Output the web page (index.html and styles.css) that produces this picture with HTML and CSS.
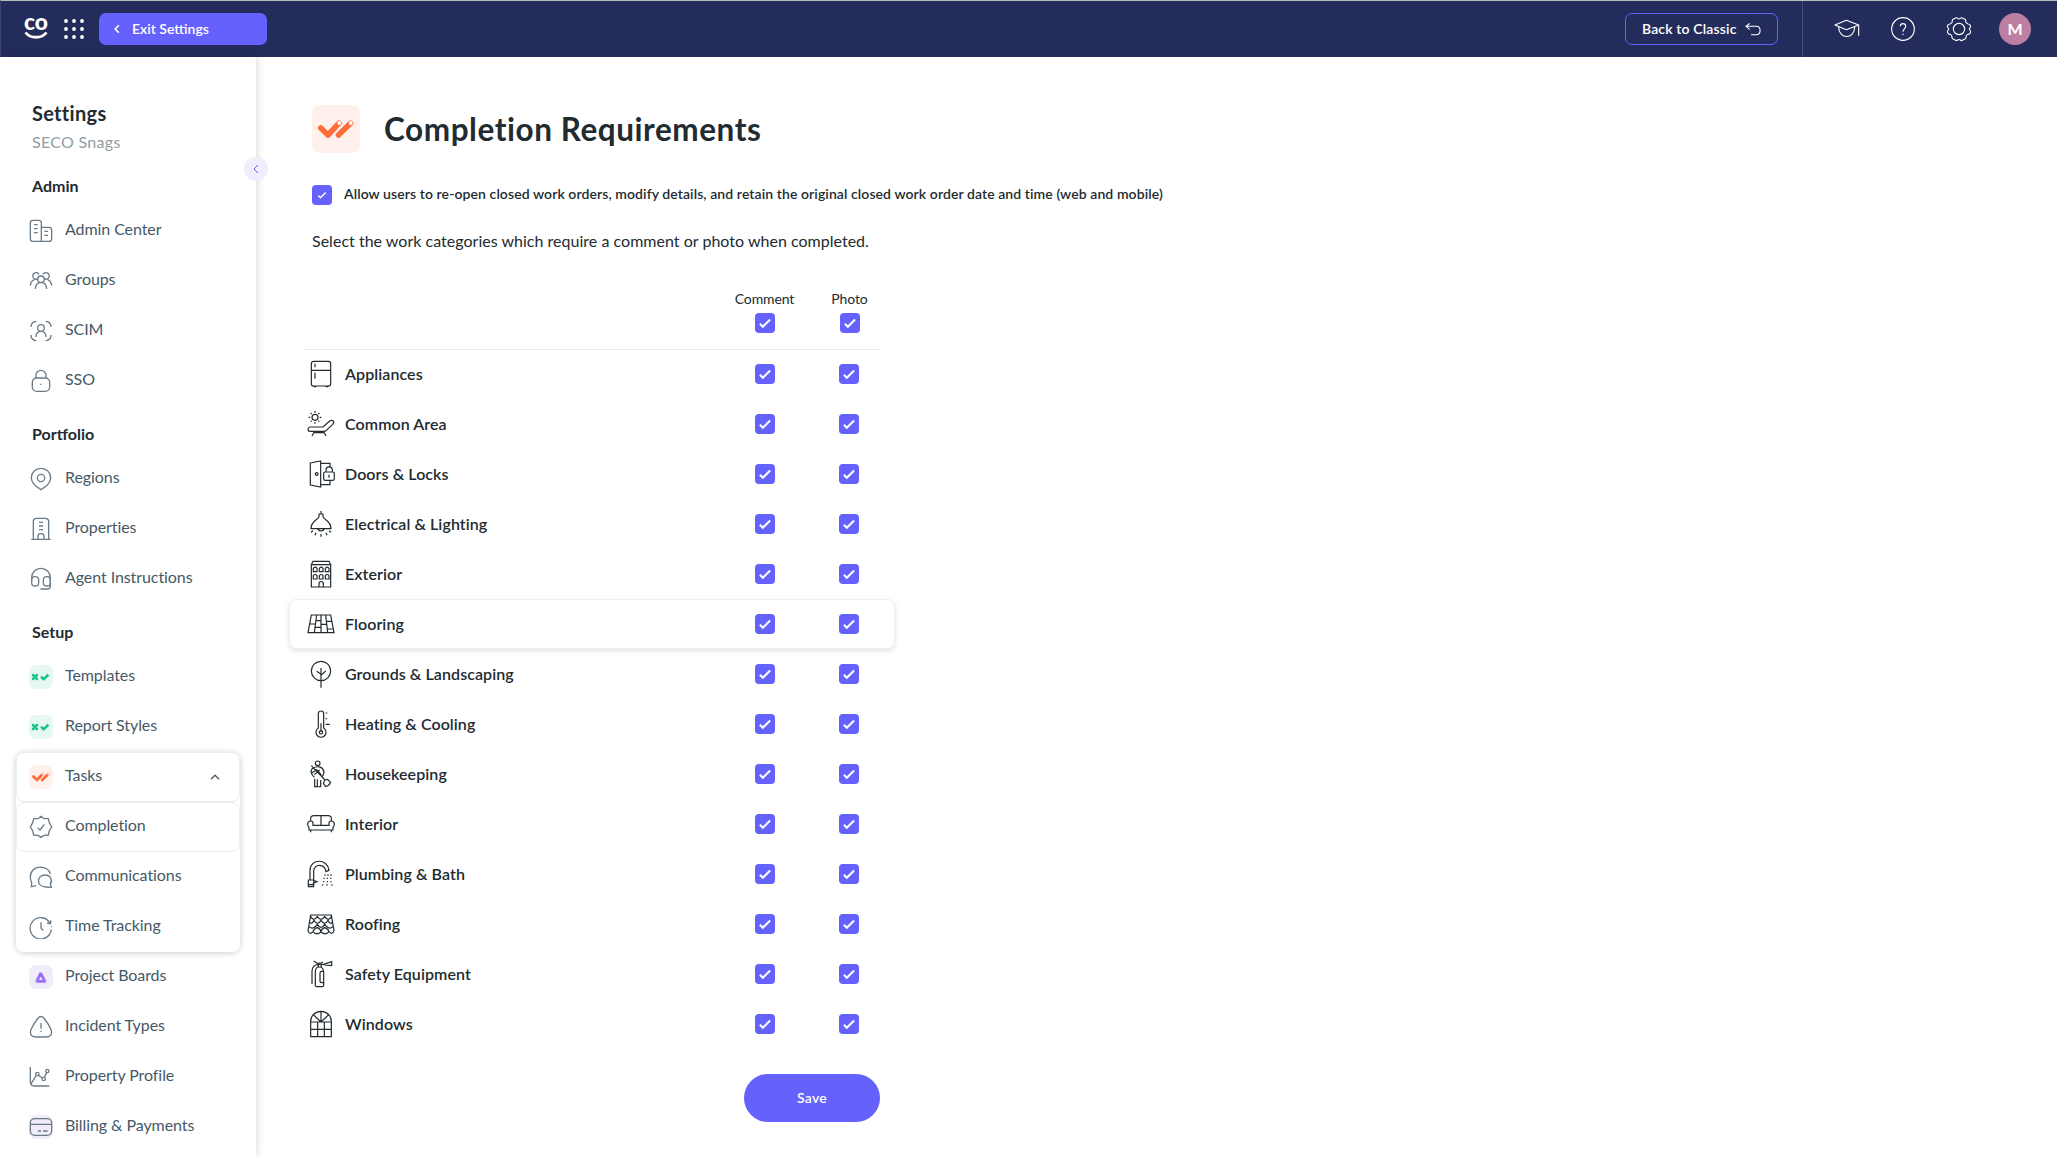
FILE: index.html
```html
<!DOCTYPE html>
<html lang="en">
<head>
    <meta charset="UTF-8">
    <meta name="viewport" content="width=device-width, initial-scale=1.0">
    <title>Completion Requirements</title>
    <link rel="stylesheet" href="styles.css">
</head>
<body>

    <!-- shared shapes -->
    <svg class="defs" width="0" height="0">
        <symbol id="tick" viewBox="0 0 20 20"><path d="M4.900 10.800l2.900 3 7.300-7.300" fill="none" stroke="#fff" stroke-width="2"/></symbol>
        <symbol id="xcheck" viewBox="0 0 72 72"><path d="M12 30l12 12M24 30l-12 12M38 37l6 6 13-13" fill="none" stroke="#1fc28b" stroke-width="7.500" stroke-linecap="round" stroke-linejoin="round"/><circle cx="59" cy="28" r="2.200" fill="#e5f8f2" stroke="none"/></symbol>
        <symbol id="tasks" viewBox="0 0 48 48"><path d="M8.800 23l7.200 7L27 18.200M26.500 30L38.500 18.200" fill="none" stroke="#ff6d3a" stroke-width="5.600" stroke-linecap="round" stroke-linejoin="round"/><circle cx="27.300" cy="18" r="1.900" fill="#fff" stroke="none"/><circle cx="38.700" cy="18" r="1.900" fill="#fff" stroke="none"/></symbol>
    </svg>

    <header class="topbar">
        <svg class="logo" viewBox="0 0 26 24">
            <text x="1" y="14" textLength="24" lengthAdjust="spacingAndGlyphs">co</text>
            <path d="M2.500 16.500c5 6.300 16 6.300 21 0" fill="none" stroke="#fff" stroke-width="2.800"/>
        </svg>
        <svg class="apps" viewBox="0 0 20 20" fill="#fff">
            <circle cx="2" cy="2" r="1.900"/><circle cx="10" cy="2" r="1.900"/><circle cx="18" cy="2" r="1.900"/>
            <circle cx="2" cy="10" r="1.900"/><circle cx="10" cy="10" r="1.900"/><circle cx="18" cy="10" r="1.900"/>
            <circle cx="2" cy="18" r="1.900"/><circle cx="10" cy="18" r="1.900"/><circle cx="18" cy="18" r="1.900"/>
        </svg>
        <a class="exit"><svg viewBox="0 0 6 10"><path d="M4.800 1.200L1.200 5l3.600 3.800"/></svg><span>Exit Settings</span></a>
        <a class="classic"><span>Back to Classic</span>
            <svg viewBox="0 0 48 42"><path d="M14 4L3 13l11 9M3 13h31c15 0 15 25 0 25H18"/></svg>
        </a>
        <div class="tools">
            <svg viewBox="0 0 84 84"><path d="M6 30l34-14 37 14-37 14zM17 36c0 38 48 38 48 0M77 30v32"/></svg>
            <svg viewBox="0 0 84 84"><circle cx="42" cy="42" r="34"/><path d="M34 34c0-11 16-11 16 0 0 8-8 7-8 16M42 56v4"/></svg>
            <svg viewBox="0 0 84 84"><circle cx="42" cy="42" r="17"/><path d="M32 9q3-2 6 1 4 3 8 0 3-3 6-1l8 4q3 2 2 6 0 6 7 8 5 0 7 4 2 4-1 7-4 4 0 8 3 3 1 7-2 5-7 5-6 2-6 8 1 4-3 6l-8 4q-3 2-6-1-4-3-8 0-3 3-6 1l-8-4q-4-2-3-6 0-6-6-8-5 0-7-5-2-4 1-7 4-4 0-8-3-3-1-7 2-4 7-4 7-2 7-8-1-4 2-6z"/></svg>
            <span class="avatar">M</span>
        </div>
    </header>

    <div class="layout">
        <aside class="sidebar">
            <div class="collapse"><svg viewBox="0 0 6 10"><path d="M5 1L1 5l4 4"/></svg></div>
            <h2>Settings</h2>
            <p class="account">SECO Snags</p>

            <h3>Admin</h3>
            <a class="item"><svg viewBox="0 0 72 72"><path d="M37 67H12q-8 0-8-8V12q0-8 8-8h17q8 0 8 8v55h23q8 0 8-8V33q0-8-8-8H37M15 17h11M15 29h11M15 41h11M46 37h11M46 49h11"/></svg>Admin Center</a>
            <a class="item"><svg viewBox="0 0 72 72"><circle cx="36" cy="31" r="10"/><path d="M27 29a10 10 0 1 1 3-13M45 29a10 10 0 1 0-3-13M19 60q1-20 17-20t17 20M4 50q1-14 12-18M68 50q-1-14-12-18"/></svg>Groups</a>
            <a class="item"><svg viewBox="0 0 72 72"><circle cx="36" cy="27" r="10"/><path d="M21 54q0-17 15-17t15 17M6 24q0-16 16-17M50 7q16 1 16 17M6 48q0 16 16 17M50 65q16-1 16-17"/></svg>SCIM</a>
            <a class="item"><svg viewBox="0 0 72 72"><rect x="10" y="27" width="52" height="40" rx="13"/><path d="M21 27v-8a15 15 0 0 1 30 0v8M36 44v4"/></svg>SSO</a>

            <h3>Portfolio</h3>
            <a class="item"><svg viewBox="0 0 72 72"><path d="M36 68C24 61 7 49 7 32a29 28 0 0 1 58 0c0 17-17 29-29 36z"/><circle cx="36" cy="33" r="11"/></svg>Regions</a>
            <a class="item"><svg viewBox="0 0 72 72"><path d="M7 67h58M13 67V14q0-10 10-10h26q10 0 10 10v53M30 16h12M30 27h12M30 38h12M27 67V57q0-7 9-7t9 7v10"/></svg>Properties</a>
            <a class="item"><svg viewBox="0 0 72 72"><path d="M8 42V32a28 28 0 0 1 56 0v26q0 8-8 8H34"/><rect x="8" y="29" width="21" height="28" rx="10"/><rect x="43" y="29" width="21" height="28" rx="10"/></svg>Agent Instructions</a>

            <h3>Setup</h3>
            <a class="item"><svg class="green"><use href="#xcheck"/></svg>Templates</a>
            <a class="item"><svg class="green"><use href="#xcheck"/></svg>Report Styles</a>
            <div class="group">
                <a class="item boxed"><svg class="orange"><use href="#tasks"/></svg>Tasks<svg class="caret" viewBox="0 0 10 6"><path d="M1 5.200l4-4 4 4"/></svg></a>
                <a class="item boxed active"><svg viewBox="0 0 72 72"><path d="M36 4l9 7 13 0 3 12 7 13-7 11-3 13-13 1-9 6-9-6-13-1-3-13-7-11 7-13 3-12 13 0z"/><path d="M26 38l7 7 13-17"/></svg>Completion</a>
                <a class="item"><svg viewBox="0 0 72 72"><path d="M64 27C60 0 4-4 4 36q0 10 4 17l-1 12 14-3"/><path d="M67 67l-16-1c-30 0-29-36-3-36 20 0 22 19 16 27z"/></svg>Communications</a>
                <a class="item"><svg viewBox="0 0 72 72"><path d="M63 24A32 32 0 1 0 67 44M66 16l-2 10-10-2M36 22v17l7 8M67 34v2"/></svg>Time Tracking</a>
            </div>
            <a class="item"><svg class="violet" viewBox="0 0 72 72"><path d="M35 25L23 49h25z" fill="none" stroke="#9b6dff" stroke-width="8.500" stroke-linejoin="round"/><path d="M35 21v3M20 49h3M49 49h3" stroke="#fff" stroke-width="2"/></svg>Project Boards</a>
            <a class="item"><svg viewBox="0 0 72 72"><path d="M25 12q11-15 22 0 13 17 20 34 4 20-17 20H22Q1 66 5 46q7-17 20-34zM36 24v17M36 47v4"/></svg>Incident Types</a>
            <a class="item"><svg viewBox="0 0 72 72"><path d="M4 6v45q0 12 12 12h45M5 58l17-27M28 31l13 8M46 37l7-14"/><circle cx="25" cy="27" r="5"/><circle cx="44" cy="42" r="5"/><circle cx="55" cy="18" r="5"/></svg>Property Profile</a>
            <a class="item"><svg class="card" viewBox="0 0 72 72"><rect x="4" y="11" width="64" height="50" rx="13"/><path d="M4 28h64M27 48h9M42 48h14"/></svg>Billing &amp; Payments</a>
        </aside>

        <main class="content">
            <div class="title">
                <svg class="title-icon"><use href="#tasks"/></svg>
                <h1>Completion Requirements</h1>
            </div>

            <div class="reopen">
                <span class="check small"><svg><use href="#tick"/></svg></span>
                <b>Allow users to re-open closed work orders, modify details, and retain the original closed work order date and time (web and mobile)</b>
            </div>

            <p class="hint">Select the work categories which require a comment or photo when completed.</p>

            <div class="thead">
                <div class="col"><span>Comment</span><span class="check"><svg><use href="#tick"/></svg></span></div>
                <div class="col"><span>Photo</span><span class="check"><svg><use href="#tick"/></svg></span></div>
            </div>

            <div class="rows">
                <div class="row">
                    <svg class="icon" viewBox="0 0 84 84"><rect x="13" y="4" width="58" height="74" rx="7"/><path d="M13 31h58M24 11v11M24 38v18M20 80h8M56 80h8"/></svg>
                    <span class="name">Appliances</span>
                    <span class="check"><svg><use href="#tick"/></svg></span><span class="check"><svg><use href="#tick"/></svg></span>
                </div>
                <div class="row">
                    <svg class="icon" viewBox="0 0 84 84"><circle cx="24" cy="22" r="9"/><path d="M24 3v5M24 36v5M5 22h5M38 22h5M11 9l3 3M34 32l3 3M11 35l3-3M34 12l3-3M9 51h39l20-18q6-4 11 0 3 5-2 10L58 61q-3 3-7 3H9q-6 0-6-6t6-7zM22 65l-7 13M50 65l7 13M22 68h30"/></svg>
                    <span class="name">Common Area</span>
                    <span class="check"><svg><use href="#tick"/></svg></span><span class="check"><svg><use href="#tick"/></svg></span>
                </div>
                <div class="row">
                    <svg class="icon" viewBox="0 0 84 84"><path d="M10 9l31-6v78l-31-6zM41 10h28v11M41 74h28V62M57 36v-6a9 9 0 0 1 19 0v6M66 44v9"/><circle cx="29" cy="42" r="4"/><rect x="50" y="36" width="32" height="25" rx="5"/></svg>
                    <span class="name">Doors &amp; Locks</span>
                    <span class="check"><svg><use href="#tick"/></svg></span><span class="check"><svg><use href="#tick"/></svg></span>
                </div>
                <div class="row">
                    <svg class="icon" viewBox="0 0 84 84"><path d="M42 3v8M36 22V12h12v10M36 20c-3 10-24 12-24 36h60c0-24-21-26-24-36M32 57q10 12 20 0M18 62l-6 5M27 68l-3 8M42 72v8M57 68l3 8M66 62l6 5"/></svg>
                    <span class="name">Electrical &amp; Lighting</span>
                    <span class="check"><svg><use href="#tick"/></svg></span><span class="check"><svg><use href="#tick"/></svg></span>
                </div>
                <div class="row">
                    <svg class="icon" viewBox="0 0 84 84"><path d="M13 14l5-10h48l5 10zM13 14v67h58V14M36 81V71a6 6 0 0 1 13 0v10M19 35V25q6-7 11 0v10zM37 35V25q6-7 11 0v10zM55 35V25q6-7 11 0v10zM19 57V47q6-7 11 0v10zM37 57V47q6-7 11 0v10zM55 57V47q6-7 11 0v10z"/></svg>
                    <span class="name">Exterior</span>
                    <span class="check"><svg><use href="#tick"/></svg></span><span class="check"><svg><use href="#tick"/></svg></span>
                </div>
                <div class="row hover">
                    <svg class="icon" viewBox="0 0 84 84"><path d="M3 68l10-53h58l10 53zM29 15l-7 53M42 15v53M56 15l6 53M9 42h16M25 52h17M27 32h15M42 43h17M59 34h15M60 57h18"/></svg>
                    <span class="name">Flooring</span>
                    <span class="check"><svg><use href="#tick"/></svg></span><span class="check"><svg><use href="#tick"/></svg></span>
                </div>
                <div class="row">
                    <svg class="icon" viewBox="0 0 84 84"><circle cx="42" cy="33" r="29"/><path d="M42 24v59M29 34l13 9M56 33L42 46"/></svg>
                    <span class="name">Grounds &amp; Landscaping</span>
                    <span class="check"><svg><use href="#tick"/></svg></span><span class="check"><svg><use href="#tick"/></svg></span>
                </div>
                <div class="row">
                    <svg class="icon" viewBox="0 0 84 84"><path d="M34 54V11a8 8 0 0 1 16 0v43a15 15 0 1 1-16 0zM42 40v26M56 9h5M56 26h4M56 43h12"/><circle cx="42" cy="67" r="5"/></svg>
                    <span class="name">Heating &amp; Cooling</span>
                    <span class="check"><svg><use href="#tick"/></svg></span><span class="check"><svg><use href="#tick"/></svg></span>
                </div>
                <div class="row">
                    <svg class="icon" viewBox="0 0 84 84"><circle cx="32" cy="10" r="7"/><path d="M13 17l41 43M22 52c-10-8-14-22-4-27 12-8 28-6 32 8 3 12-2 13-6 17M15 38l14-9 14 16M22 44l16-14M23 56v24h8V58M34 80h7V60M54 60l8-2 9 9q-5 11-15 13l-7-10z"/></svg>
                    <span class="name">Housekeeping</span>
                    <span class="check"><svg><use href="#tick"/></svg></span><span class="check"><svg><use href="#tick"/></svg></span>
                </div>
                <div class="row">
                    <svg class="icon" viewBox="0 0 84 84"><path d="M11 34V26q0-9 10-9h42q10 0 10 9v8M42 17v29M18 46h48v-6q0-7 7-7 9 0 9 9 0 8-4 10v8H6v-8q-4-2-4-10 0-9 9-9 7 0 7 7zM11 60v7M73 60v7"/></svg>
                    <span class="name">Interior</span>
                    <span class="check"><svg><use href="#tick"/></svg></span><span class="check"><svg><use href="#tick"/></svg></span>
                </div>
                <div class="row">
                    <svg class="icon" viewBox="0 0 84 84"><path d="M9 60V32C9-6 62-5 66 31l-9 4C53 10 20 10 20 34v26M4 60h16v20H4zM4 74h18M20 62l10 3-14 7"/><path d="M54 43v4M63 43v4M72 43v4M51 53v4M61 53v4M71 53v4M50 63v4M61 63v4M72 63v4M47 73v4M60 73v4M75 73v4"/></svg>
                    <span class="name">Plumbing &amp; Bath</span>
                    <span class="check"><svg><use href="#tick"/></svg></span><span class="check"><svg><use href="#tick"/></svg></span>
                </div>
                <div class="row">
                    <svg class="icon" viewBox="0 0 84 84"><path d="M11 15h62l8 47q-5 14-15 3-10 12-24 1-14 11-24-1-10 11-15-3zM11 20q9 16 20 0 11 16 22 0 11 16 20 0M8 36q6 10 13-5 10 18 21 0 11 18 21 0 7 15 13 5M6 50q13 11 25-7 11 18 22 0 12 18 25 7M18 66q2-10 13-13 10 3 11 13 1-10 11-13 11 3 13 13"/></svg>
                    <span class="name">Roofing</span>
                    <span class="check"><svg><use href="#tick"/></svg></span><span class="check"><svg><use href="#tick"/></svg></span>
                </div>
                <div class="row">
                    <svg class="icon" viewBox="0 0 84 84"><path d="M15 72V34q0-20 20-20M25 76V36q0-15 12-15t13 15v40q0 4-4 4H29q-4 0-4-4zM50 34h-6q-5 0-5 5v24q0 5 5 5h6M20 3l16 10h14l24-8v12l-22-2M34 9h8l6-3M34 13v8M43 13v8"/></svg>
                    <span class="name">Safety Equipment</span>
                    <span class="check"><svg><use href="#tick"/></svg></span><span class="check"><svg><use href="#tick"/></svg></span>
                </div>
                <div class="row">
                    <svg class="icon" viewBox="0 0 84 84"><path d="M11 80V34a31 30 0 0 1 62 0v46zM11 36h62M11 58h62M32 36v44M52 36v44M42 36V4M42 36L19 14M42 36l23-22"/></svg>
                    <span class="name">Windows</span>
                    <span class="check"><svg><use href="#tick"/></svg></span><span class="check"><svg><use href="#tick"/></svg></span>
                </div>
            </div>

            <button class="save">Save</button>
        </main>
    </div>

</body>
</html>
```
FILE: styles.css
```css
* {
    box-sizing: border-box;
}
body {
    font-family: Lato, "Open Sans", sans-serif;
    background-color: #fff;
    color: #222b30;
    margin: 0;
    height: 1156px;
    overflow: hidden;
}
h1, h2, h3, p {
    margin: 0;
}
.defs {
    display: block;
}
.topbar {
    display: flex;
    align-items: center;
    height: 57px;
    padding-left: 22px;
    background: #242c5b;
    border-top: 1px solid #b9bfc0;
    border-left: 1px solid #3b4270;
    color: #fff;
}
.logo {
    width: 26px;
    height: 24px;
    margin-top: -2px;
    overflow: visible;
}
.logo text {
    font-size: 22px;
    font-weight: 900;
    fill: #fff;
}
.apps {
    width: 20px;
    height: 20px;
    margin-left: 15px;
}
.exit {
    display: flex;
    align-items: center;
    gap: 12px;
    width: 168px;
    height: 32px;
    margin-left: 15px;
    padding-left: 15px;
    border-radius: 7px;
    background: #6561fc;
    font-size: 14px;
    font-weight: 600;
}
.exit svg {
    width: 6px;
    height: 10px;
    fill: none;
    stroke: #fff;
    stroke-width: 1.6;
}
.classic {
    display: flex;
    align-items: center;
    gap: 8px;
    width: 153px;
    height: 32px;
    margin-left: auto;
    padding-left: 16px;
    border: 1px solid #6561fc;
    border-radius: 7px;
    font-size: 14px;
    font-weight: 600;
    letter-spacing: 0.15px;
}
.exit span, .classic span {
    padding-bottom: 2px;
}
.classic svg {
    width: 16px;
    height: 14px;
    fill: none;
    stroke: #fff;
    stroke-width: 3.2;
}
.tools {
    display: flex;
    align-items: center;
    gap: 28px;
    height: 56px;
    margin-left: 24px;
    padding: 0 26px 0 30px;
    border-left: 1px solid #454c76;
}
.tools svg {
    width: 28px;
    height: 28px;
    fill: none;
    stroke: #fff;
    stroke-width: 3.4;
    stroke-linejoin: round;
}
.avatar {
    width: 32px;
    height: 32px;
    margin-left: -2px;
    border-radius: 50%;
    background: #bd80a3;
    font-size: 16px;
    font-weight: 700;
    line-height: 31px;
    text-align: center;
}
.layout {
    display: flex;
}
.sidebar {
    position: relative;
    width: 256px;
    height: 1099px;
    padding: 43px 16px 0;
    box-shadow: 2px 0 6px rgba(0, 0, 0, 0.12);
}
.collapse {
    position: absolute;
    top: 100px;
    right: -12px;
    display: flex;
    align-items: center;
    justify-content: center;
    width: 24px;
    height: 24px;
    border-radius: 50%;
    background: #efedfe;
}
.collapse svg {
    width: 6px;
    height: 10px;
    fill: none;
    stroke: #6561fc;
}
.sidebar h2 {
    padding-left: 16px;
    font-size: 20px;
    line-height: 26px;
    letter-spacing: 0.3px;
}
.account {
    margin-bottom: 1px;
    padding-left: 16px;
    font-size: 16px;
    line-height: 31px;
    letter-spacing: 0.3px;
    color: #919ca3;
}
.sidebar h3 {
    height: 48px;
    padding: 16px 0 0 16px;
    font-size: 16px;
    line-height: 24px;
}
.item {
    display: flex;
    align-items: center;
    height: 50px;
    padding: 0 0 6px 13px;
    font-size: 16px;
    letter-spacing: -0.08px;
    color: #465966;
}
.item svg {
    width: 24px;
    height: 24px;
    margin: 6px 12px 0 0;
    fill: none;
    stroke: #6b7c88;
    stroke-width: 4;
}
.item .green {
    border-radius: 7px;
    background: #e5f8f2;
}
.item .orange {
    border-radius: 7px;
    background: #fff0eb;
}
.item .violet,
.item .card {
    border-radius: 7px;
    background: #f0ecfa;
}
.item .caret {
    width: 10px;
    height: 6px;
    margin: 6px 19px 0 auto;
    stroke: #465966;
    stroke-width: 1.3;
}
.group {
    border-radius: 8px;
    background: #fff;
    box-shadow: 0 1px 6px rgba(0, 0, 0, 0.2);
}
.boxed {
    padding-left: 12px;
    border: 1px solid #ececec;
    border-radius: 8px;
}
.content {
    padding: 48px 0 0 33px;
}
.title {
    display: flex;
    align-items: center;
    gap: 24px;
    height: 48px;
    margin-left: 23px;
}
.title-icon {
    width: 48px;
    height: 48px;
    border-radius: 8px;
    background: #fff0eb;
}
h1 {
    font-size: 31.5px;
    line-height: 48px;
    letter-spacing: 0.55px;
}
.reopen {
    display: flex;
    align-items: center;
    gap: 12px;
    height: 20px;
    margin: 32px 0 0 23px;
    font-size: 14px;
    letter-spacing: 0.09px;
}
.reopen b {
    padding-bottom: 3px;
    font-weight: 600;
}
.hint {
    margin: 24px 0 0 23px;
    font-size: 16px;
    line-height: 24px;
    letter-spacing: 0.02px;
}
.check {
    display: block;
    width: 20px;
    height: 20px;
    border-radius: 4px;
    background: #6561fc;
}
.check svg {
    display: block;
    width: 20px;
    height: 20px;
}
.small svg {
    transform: scale(0.72);
}
.thead {
    display: flex;
    justify-content: flex-end;
    width: 576px;
    height: 61px;
    margin: 36px 0 0 15px;
    border-bottom: 1px solid #ebebeb;
}
.col {
    display: flex;
    flex-direction: column;
    align-items: center;
    width: 85px;
    font-size: 14px;
    line-height: 20px;
    letter-spacing: -0.1px;
}
.col .check {
    margin-top: 4px;
}
.col:last-child {
    margin-right: -12px;
}
.rows {
    width: 606px;
    margin-top: -1px;
}
.row {
    display: flex;
    align-items: center;
    height: 50px;
    padding: 0 36px 0 18px;
}
.hover {
    border-radius: 8px;
    box-shadow: 0 0 0 1px #efefef inset, 0 2px 5px rgba(0, 0, 0, 0.12);
}
.icon {
    width: 28px;
    height: 28px;
    flex: none;
    fill: none;
    stroke: #222b30;
    stroke-width: 3.6;
}
.name {
    margin: 0 auto 0 10px;
    padding-bottom: 2px;
    font-size: 16px;
    font-weight: 600;
    letter-spacing: 0.08px;
}
.row .check + .check {
    margin-left: 64px;
}
.save {
    display: block;
    width: 136px;
    height: 48px;
    margin: 25px 0 0 455px;
    padding-bottom: 3px;
    border: 0;
    border-radius: 24px;
    background: #6561fc;
    color: #fff;
    font-family: inherit;
    font-size: 14px;
    font-weight: 600;
    letter-spacing: 0.3px;
}
```
